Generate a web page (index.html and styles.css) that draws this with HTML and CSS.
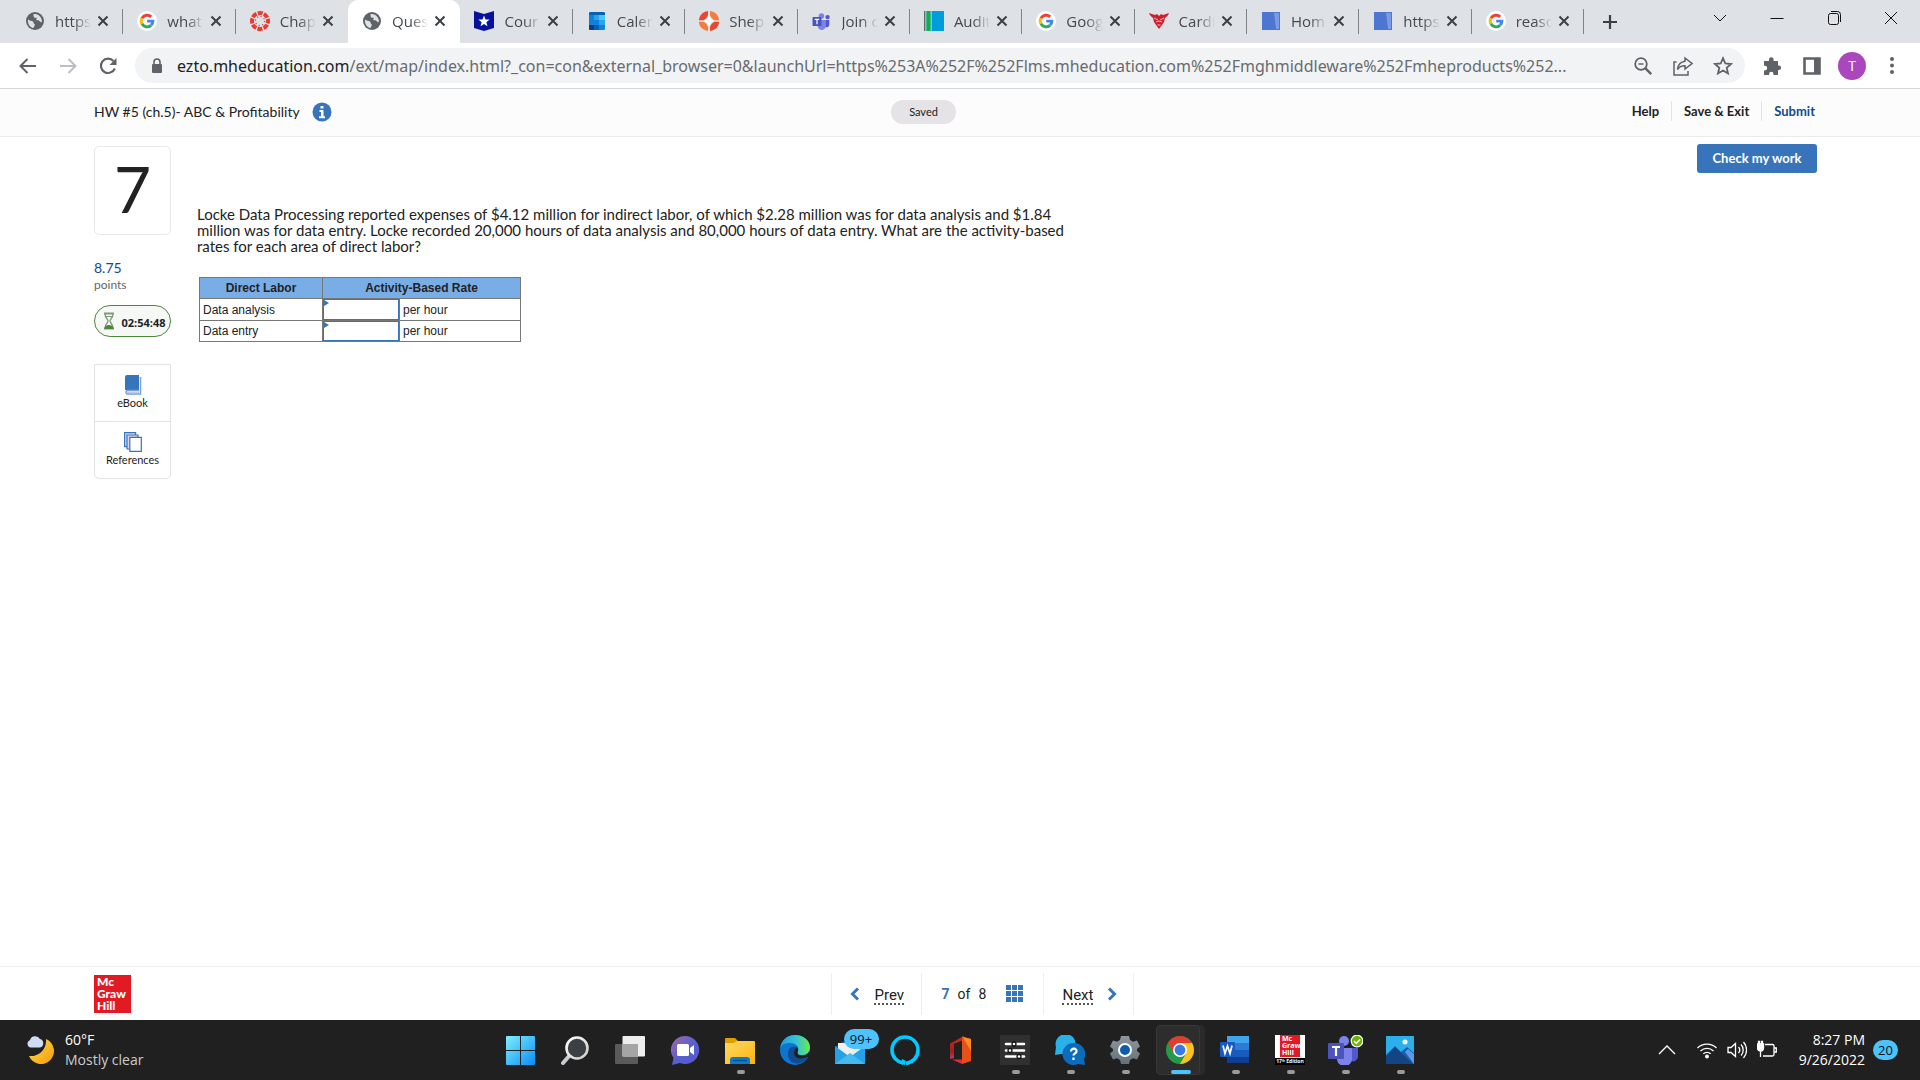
FILE: index.html
```html
<!DOCTYPE html>
<html lang="en">
<head>
<meta charset="utf-8">
<title>Question 7 - HW #5 (ch.5)- ABC &amp; Profitability</title>
<link rel="stylesheet" href="styles.css">
</head>
<body>
<svg class="defs" aria-hidden="true">
  <defs>
    <linearGradient id="win" x1="0" y1="0" x2="1" y2="1"><stop offset="0" stop-color="#7df0ff"/><stop offset="1" stop-color="#0a8cf5"/></linearGradient>
    <linearGradient id="lens" x1="0" y1="0" x2="1" y2="1"><stop offset="0" stop-color="#fff"/><stop offset="1" stop-color="#c9cdcf"/></linearGradient>
    <linearGradient id="chat" x1="0" y1="0" x2="1" y2="1"><stop offset="0" stop-color="#a56aa5"/><stop offset=".5" stop-color="#5a5fcf"/><stop offset="1" stop-color="#5358c8"/></linearGradient>
    <linearGradient id="folder" x1="0" y1="0" x2="1" y2="1"><stop offset="0" stop-color="#ffd968"/><stop offset="1" stop-color="#fbb50c"/></linearGradient>
    <linearGradient id="edge" x1="0" y1="0" x2="1" y2="0"><stop offset="0" stop-color="#1c9be0"/><stop offset=".55" stop-color="#34c4d6"/><stop offset="1" stop-color="#6cea4c"/></linearGradient>
    <linearGradient id="moon" x1="0" y1="0" x2="1" y2="1"><stop offset="0" stop-color="#ffdd4a"/><stop offset="1" stop-color="#f49b0c"/></linearGradient>
    <linearGradient id="office" x1="0" y1="0" x2="0" y2="1"><stop offset="0" stop-color="#d3261b"/><stop offset=".6" stop-color="#a02020"/><stop offset="1" stop-color="#c654a8"/></linearGradient>
    <linearGradient id="gear" x1="0" y1="0" x2="0" y2="1"><stop offset="0" stop-color="#8f979d"/><stop offset="1" stop-color="#65707a"/></linearGradient>
    <symbol id="globe" viewBox="0 0 20 20"><circle cx="10" cy="10" r="9" fill="#5f6368"/><path d="M3 8.500c1.800 1.500 3.500 1 5 2 1 .8.3 2 1.300 2.500.8.500.600 1.500 0 2.200-.5.600-.6 1.300-1 1.800C5 16.500 2.500 13 3 8.500zM8.500 3.200c2-.6 5.500.300 7.300 3.300.9 1.500 1.200 3 1 4.500-1 .7-1.500-.3-2.300-1-1-.8-2.300 0-3-.9-.5-.8-.2-1.500.5-2-.8-.6-2.300.2-3-.8-.6-1-.4-2.300-.5-3.100z" fill="#dee1e6"/></symbol>
    <symbol id="google" viewBox="0 0 20 20"><circle cx="10" cy="10" r="10" fill="#fff"/><g fill="none" stroke-width="2.900"><path d="M4.900 7.200A5.900 5.900 0 0 1 14.200 5.900" stroke="#ea4335"/><path d="M4.900 12.800A5.900 5.900 0 0 1 4.900 7.200" stroke="#fbbc05"/><path d="M14 14.300A5.900 5.900 0 0 1 4.900 12.800" stroke="#34a853"/><path d="M10.200 10.100H15.900A5.900 5.900 0 0 1 14 14.300" stroke="#4285f4"/></g></symbol>
    <symbol id="doc" viewBox="0 0 20 20"><path d="M1 1h18v18H1z" fill="#4d76d1"/><path d="M13 2h5v16h-3z" fill="#8eabe8" opacity=".7"/></symbol>
    <symbol id="close" viewBox="0 0 12 12"><path d="M1.500 1.500l9 9M10.500 1.500l-9 9" stroke="#3c4043" stroke-width="2"/></symbol>
    <symbol id="teams" viewBox="0 0 36 30"><circle cx="17" cy="6" r="5" fill="#7b83eb"/><circle cx="28" cy="8" r="4" fill="#5059c9"/><path d="M22 13h9v9a5 5 0 0 1-7 4z" fill="#5059c9"/><path d="M10 13h15v9a7 7 0 0 1-15 3z" fill="#7b83eb"/><rect x="1" y="8" width="16" height="16" rx="1" fill="#4b53bc"/><path d="M5 12h8M9 12v9" stroke="#fff" stroke-width="2.200"/></symbol>
  </defs>
</svg>

<header class="browser">
  <div class="tabstrip">
    <nav class="tabs" aria-label="Tabs">
      <div class="tab"><svg class="fav"><use href="#globe"/></svg><span class="tab-title">https</span><button class="x" aria-label="Close"><svg><use href="#close"/></svg></button></div>
      <div class="tab"><svg class="fav"><use href="#google"/></svg><span class="tab-title">what</span><button class="x" aria-label="Close"><svg><use href="#close"/></svg></button></div>
      <div class="tab before"><svg class="fav" viewBox="0 0 20 20"><circle cx="10" cy="10" r="8" fill="none" stroke="#ea3b30" stroke-width="4" stroke-dasharray="5 1.280" stroke-dashoffset="2.500"/><circle cx="10" cy="10" r="4.600" fill="none" stroke="#ea3b30" stroke-width="1.200" stroke-dasharray="1.200 2.410"/></svg><span class="tab-title">Chap</span><button class="x" aria-label="Close"><svg><use href="#close"/></svg></button></div>
      <div class="tab active"><svg class="fav"><use href="#globe"/></svg><span class="tab-title">Ques</span><button class="x" aria-label="Close"><svg><use href="#close"/></svg></button></div>
      <div class="tab"><svg class="fav" viewBox="0 0 20 20"><path d="M0 0l10 3L20 0v17l-10 3-10-3z" fill="#06129b"/><path d="M10 4.500l1.500 3.900 4.100.2-3.200 2.600 1.100 4-3.500-2.300-3.500 2.300 1.100-4-3.200-2.600 4.100-.2z" fill="#fff"/></svg><span class="tab-title">Cour</span><button class="x" aria-label="Close"><svg><use href="#close"/></svg></button></div>
      <div class="tab"><svg class="fav" viewBox="0 0 20 20"><rect x="2" y="1" width="16" height="18" rx="1.500" fill="#1080dc"/><path d="M2 3V2.500A1.500 1.500 0 0 1 3.500 1h13A1.500 1.500 0 0 1 18 2.500V4H2z" fill="#0660b4"/><path d="M12 4h6v5h-6z" fill="#45c8f5"/><path d="M7 4h5v5H7zM12 9h6v5h-6z" fill="#28a4ec"/><path d="M2 14h5v5H3.500A1.500 1.500 0 0 1 2 17.500z" fill="#123c73"/><path d="M7 14h5v5H7z" fill="#0b5eb0"/></svg><span class="tab-title">Calen</span><button class="x" aria-label="Close"><svg><use href="#close"/></svg></button></div>
      <div class="tab"><svg class="fav" viewBox="0 0 20 20"><path d="M9 0C3 1 0 5 0 9.300h4.500C6 8.500 8 7 9 4z" fill="#e8482f"/><path d="M11 0c6 1 9 5 9 9.300h-4.500C14 8.500 12 7 11 4z" fill="#f47c3c"/><path d="M9 20c-6-1-9-5-9-9.300h4.500C6 11.500 8 13 9 16z" fill="#f47c3c"/><path d="M11 20c6-1 9-5 9-9.300h-4.500C14 11.500 12 13 11 16z" fill="#e8482f"/><path d="M10 4c1 3.500 2.500 5 5 6-2.500 1-4 2.500-5 6-1-3.500-2.500-5-5-6 2.500-1 4-2.500 5-6z" fill="#fff"/></svg><span class="tab-title">Shep</span><button class="x" aria-label="Close"><svg><use href="#close"/></svg></button></div>
      <div class="tab"><svg class="fav"><use href="#teams"/></svg><span class="tab-title">Join c</span><button class="x" aria-label="Close"><svg><use href="#close"/></svg></button></div>
      <div class="tab"><svg class="fav" viewBox="0 0 20 20"><path d="M0 0h20v20H0z" fill="#009ddc"/><path d="M0 0h1.500v20H0z" fill="#666"/><path d="M1.500 0h1v20h-1zM6.500 0h1v20h-1z" fill="#cfe"/><path d="M2.500 0h4v20h-4z" fill="#13ae48"/></svg><span class="tab-title">Audit</span><button class="x" aria-label="Close"><svg><use href="#close"/></svg></button></div>
      <div class="tab"><svg class="fav"><use href="#google"/></svg><span class="tab-title">Goog</span><button class="x" aria-label="Close"><svg><use href="#close"/></svg></button></div>
      <div class="tab"><svg class="fav" viewBox="0 0 20 20"><path d="M0 2l6 2 2-1 2 2 2-2 2 1 6-2c-1 3-3 4-4 5l-1 4-2 3-3 4-3-4-2-3-1-4C3 6 1 5 0 2z" fill="#cd202e"/><path d="M5 7l4 2M15 7l-4 2M7 11l3-1 3 1M8.500 14h3" stroke="#f3b7bb" stroke-width="1" fill="none"/></svg><span class="tab-title">Cardi</span><button class="x" aria-label="Close"><svg><use href="#close"/></svg></button></div>
      <div class="tab"><svg class="fav"><use href="#doc"/></svg><span class="tab-title">Hom</span><button class="x" aria-label="Close"><svg><use href="#close"/></svg></button></div>
      <div class="tab"><svg class="fav"><use href="#doc"/></svg><span class="tab-title">https</span><button class="x" aria-label="Close"><svg><use href="#close"/></svg></button></div>
      <div class="tab"><svg class="fav"><use href="#google"/></svg><span class="tab-title">reasc</span><button class="x" aria-label="Close"><svg><use href="#close"/></svg></button></div>
    </nav>
    <button class="newtab" aria-label="New tab"><svg viewBox="0 0 16 16" width="16" height="16"><path d="M8 1v14M1 8h14" stroke="#3c4043" stroke-width="2.200"/></svg></button>
    <div class="winbtns">
      <button aria-label="Search tabs"><svg viewBox="0 0 16 16"><path d="M2 5l6 6 6-6"/></svg></button>
      <button aria-label="Minimize"><svg viewBox="0 0 16 16"><path d="M1.500 8.500h13"/></svg></button>
      <button aria-label="Restore"><svg viewBox="0 0 16 16"><rect x="2.500" y="3.500" width="10" height="11" rx="2"/><path d="M5 1.500h6.500a3 3 0 0 1 3 3V12"/></svg></button>
      <button aria-label="Close window"><svg viewBox="0 0 16 16"><path d="M2 2l12 12M14 2L2 14"/></svg></button>
    </div>
  </div>
  <div class="toolbar">
    <button class="tool" aria-label="Back"><svg viewBox="0 0 20 20"><path d="M18 10H3M9.500 3L2.500 10l7 7" fill="none" stroke="#5f6368" stroke-width="2"/></svg></button>
    <button class="tool" aria-label="Forward"><svg viewBox="0 0 20 20"><path d="M2 10h15M10.500 3l7 7-7 7" fill="none" stroke="#bcbec1" stroke-width="2"/></svg></button>
    <button class="tool" aria-label="Reload"><svg viewBox="0 0 20 20"><path d="M16.800 12.500A7.200 7.200 0 1 1 15.500 5" fill="none" stroke="#5f6368" stroke-width="2.100"/><path d="M18.500 2v7h-7z" fill="#5f6368"/></svg></button>
    <div class="omnibox">
      <svg class="lock" viewBox="0 0 12 16"><rect x="1" y="6" width="10" height="9" rx="1" fill="#5f6368"/><path d="M3 7V4a3 3 0 0 1 6 0v3" fill="none" stroke="#5f6368" stroke-width="1.600"/></svg>
      <div class="url"><span class="host">ezto.mheducation.com</span>/ext/map/index.html?_con=con&amp;external_browser=0&amp;launchUrl=https%253A%252F%252Flms.mheducation.com%252Fmghmiddleware%252Fmheproducts%252...</div>
      <button class="tool" aria-label="Zoom"><svg viewBox="0 0 20 20" fill="none" stroke="#5f6368"><circle cx="8" cy="8" r="5.800" stroke-width="1.800"/><path d="M12.200 12.200l6 6" stroke-width="2.400"/><path d="M5.500 8h5" stroke-width="1.500"/></svg></button>
      <button class="tool" aria-label="Share"><svg viewBox="0 0 20 20" fill="none" stroke="#5f6368" stroke-width="1.500"><path d="M3.500 6H1v13h14v-4"/><path d="M12 2l7 5.500-7 5.500v-3.200c-4 0-6 1.200-7.500 3.700.4-4 2.500-7.500 7.500-8.200z"/></svg></button>
      <button class="tool" aria-label="Bookmark"><svg viewBox="0 0 20 20"><path d="M10 2.200l2.300 5.300 5.700.5-4.300 3.800 1.300 5.700-5-3-5 3 1.300-5.700L2 8l5.700-.5z" fill="none" stroke="#5f6368" stroke-width="1.800"/></svg></button>
    </div>
    <button class="tool" aria-label="Extensions"><svg viewBox="0 0 20 20"><path d="M7 3.500a2.300 2.300 0 0 1 4.600 0V5H16v4.500h.8a2.300 2.300 0 0 1 0 4.600H16V19h-4.500v-1a2.200 2.200 0 0 0-4.400 0v1H2v-4.500h.8a2.400 2.400 0 0 0 0-4.800H2V5h5z" fill="#5f6368"/></svg></button>
    <button class="tool" aria-label="Side panel"><svg viewBox="0 0 20 20"><path d="M2.500 2.500h15v15h-15z" fill="none" stroke="#5f6368" stroke-width="2.600"/><path d="M12 2h6v16h-6z" fill="#5f6368"/></svg></button>
    <button class="avatar" aria-label="Profile">T</button>
    <button class="tool" aria-label="Menu"><svg viewBox="0 0 20 20" fill="#5f6368"><circle cx="10" cy="3" r="2"/><circle cx="10" cy="9.500" r="2"/><circle cx="10" cy="16" r="2"/></svg></button>
  </div>
</header>

<div class="page-head">
  <div class="title"><h1>HW #5 (ch.5)- ABC &amp; Profitability</h1><button class="info" aria-label="Information"><svg viewBox="0 0 20 20"><circle cx="10" cy="10" r="9.500" fill="#3874ba"/><path d="M10 4v2.500" stroke="#fff" stroke-width="3"/><path d="M7.500 9H10v5.500M7 15.200h6" fill="none" stroke="#fff" stroke-width="2"/><path d="M10.500 8.200v7" stroke="#fff" stroke-width="2"/></svg></button></div>
  <span class="saved">Saved</span>
  <nav class="actions"><a href="#help">Help</a><a href="#exit">Save &amp; Exit</a><a href="#submit" class="submit">Submit</a></nav>
</div>

<main class="content">
  <aside class="side">
    <div class="number">7</div>
    <div class="points"><strong>8.75</strong><span>points</span></div>
    <div class="timer"><svg viewBox="0 0 12 18"><path d="M1 1.500h10M1 16.500h10" stroke="#7f9a78" stroke-width="2"/><path d="M2 2c0 4 3 5 3 7s-3 3-3 7M10 2c0 4-3 5-3 7s3 3 3 7" fill="none" stroke="#7f9a78" stroke-width="1.300"/><path d="M3 4.500h6" stroke="#7f9a78"/><path d="M1.500 17c0-3 2-4 4.500-4s4.500 1 4.500 4z" fill="#4d8738"/></svg><time>02:54:48</time></div>
    <div class="resources">
      <button><svg viewBox="0 0 18 20"><path d="M3 0h12v15H1V2a2 2 0 0 1 2-2z" fill="#3874ba"/><path d="M16.500 2v17H3a2 2 0 0 1 0-3.500h12" fill="none" stroke="#73a2dc" stroke-width="1.500"/><path d="M3 17.300h12" stroke="#b9b9dc"/></svg>eBook</button>
      <button><svg viewBox="0 0 18 20" stroke="#3874ba" stroke-width="1.200"><path d="M.6.600h11v14H.6z" fill="#d9d6ec"/><path d="M3 3h11v14H3z" fill="#d9d6ec"/><path d="M5.800 5.400h11.500v14H5.800z" fill="#fff"/></svg>References</button>
    </div>
  </aside>
  <section class="question">
    <p>Locke Data Processing reported expenses of $4.12 million for indirect labor, of which $2.28 million was for data analysis and $1.84 million was for data entry. Locke recorded 20,000 hours of data analysis and 80,000 hours of data entry. What are the activity-based rates for each area of direct labor?</p>
    <table>
      <thead><tr><th scope="col" class="col-a">Direct Labor</th><th scope="col" colspan="2">Activity-Based Rate</th></tr></thead>
      <tbody>
        <tr><td><label for="rate1">Data analysis</label></td><td class="entry"><input id="rate1" type="text"></td><td class="col-c">per hour</td></tr>
        <tr><td><label for="rate2">Data entry</label></td><td class="entry"><input id="rate2" type="text"></td><td class="col-c">per hour</td></tr>
      </tbody>
    </table>
  </section>
  <button class="check">Check my work</button>
</main>

<footer class="page-foot">
  <div class="mgh"><span>Mc</span><span>Graw</span><span>Hill</span></div>
  <nav class="pager">
    <a href="#prev"><svg viewBox="0 0 10 14"><path d="M8 1.500L2.500 7 8 12.500"/></svg><span>Prev</span></a>
    <div class="count"><b>7</b><span>of</span><span>8</span><button class="grid" aria-label="All questions"><svg viewBox="0 0 18 18" fill="#3874ba"><path d="M0 0h5v5H0zM6 0h5v5H6zM12 0h5v5h-5zM0 6h5v5H0zM6 6h5v5H6zM12 6h5v5h-5zM0 12h5v5H0zM6 12h5v5H6zM12 12h5v5h-5z"/></svg></button></div>
    <a href="#next"><span>Next</span><svg viewBox="0 0 10 14"><path d="M2 1.500L7.500 7 2 12.500"/></svg></a>
  </nav>
</footer>

<footer class="taskbar">
  <button class="weather">
    <svg viewBox="0 0 28 28"><path d="M20 3a13 13 0 1 1-17 17c9 1 18-6 17-17z" fill="url(#moon)"/><path d="M4 11.500a4 4 0 0 1 0-7.500 5.500 5.500 0 0 1 10-1 4.400 4.400 0 0 1 0 8.500z" fill="#cfdcf5"/></svg>
    <span><b>60°F</b><i>Mostly clear</i></span>
  </button>
  <div class="apps">
    <button aria-label="Start"><svg viewBox="0 0 30 30"><path d="M1 2a1 1 0 0 1 1-1h13v14H1zM16 1h13a1 1 0 0 1 1 1v13H16zM1 16h14v14H2a1 1 0 0 1-1-1zM16 16h14v13a1 1 0 0 1-1 1H16z" fill="url(#win)"/></svg></button>
    <button aria-label="Search"><svg viewBox="0 0 30 30"><path d="M10 20l-7 8" stroke="#c9cdcf" stroke-width="4" stroke-linecap="round"/><circle cx="17" cy="13" r="10.500" fill="#3c4043" stroke="url(#lens)" stroke-width="2.600"/></svg></button>
    <button aria-label="Task view"><svg viewBox="0 0 30 30"><rect y="9" width="23" height="20" rx="1" fill="#5a5a5a"/><rect x="7.500" y="1" width="22.500" height="20.500" rx="1" fill="#eee"/><path d="M7.500 9H23v12.500H7.500z" fill="#a5a5a5"/></svg></button>
    <button aria-label="Chat"><svg viewBox="0 0 30 30"><path d="M15 1a14 14 0 1 1-5 27l-8 2 1.500-7A14 14 0 0 1 15 1z" fill="url(#chat)"/><rect x="7" y="9" width="12" height="12" rx="1.500" fill="#fff"/><path d="M20 13l4-3v10l-4-3z" fill="#fff"/></svg></button>
    <button aria-label="File Explorer" class="open"><svg viewBox="0 0 30 30"><path d="M0 4a1 1 0 0 1 1-1h9l3 3v5H0z" fill="#e09f00"/><path d="M0 8h9l3-2h17a1 1 0 0 1 1 1v22H0z" fill="url(#folder)"/><path d="M5 29v-4a3 3 0 0 1 3-3h14a3 3 0 0 1 3 3v4z" fill="#0f7ac9"/><path d="M8 25.500h14" stroke="#07508f" stroke-width="1.300"/></svg></button>
    <button aria-label="Edge"><svg viewBox="0 0 30 30"><circle cx="15" cy="15" r="15" fill="#0c75cf"/><path d="M0 14C1 5 7 0 15 0c9 0 15 6 15 12 0 5-3 8-8 8-3 0-5-1-4-3 2-6-3-9-8-9-5 0-9 2-10 6z" fill="url(#edge)"/><path d="M16 12c-4-2-8 2-8 7 0 7 6 11 12 9 4-1 7-4 8-6-5 3-14 2-14-4 0-3 2-4 2-6z" fill="#134a94"/><path d="M16 12c3 1 2 4 1.500 5.500-.5 1.500 1 3 4.500 3 4 0 6-2 7.500-4.500L30 22l-2.500 2c.5-1 .5-2 0-2-6 3-13.500 2-13.500-4 0-3 2-4 2-6z" fill="#202020"/></svg></button>
    <button aria-label="Mail"><svg viewBox="0 0 30 30"><path d="M0 12L15 2l15 10v5H0z" fill="#0d5ba8"/><path d="M3 8h24v12H3z" fill="#eee"/><path d="M0 11l15 11 15-11v18H0z" fill="#25a1e8"/><path d="M0 29l15-11 15 11z" fill="#45b9f0"/></svg><span class="badge">99+</span></button>
    <button aria-label="Alexa"><svg viewBox="0 0 30 30"><path d="M13.500 28.300C7 27 2 22 2 15a13 13 0 0 1 26 0c0 7-5 12.500-12 13.500" fill="none" stroke="#00caff" stroke-width="3.600"/><path d="M12 24l4 2-1 4-4-2z" fill="#00caff"/></svg></button>
    <button aria-label="Office"><svg viewBox="0 0 30 30"><path d="M19 1l-4 2-5 3-5 2.500V24l4-1V9l8-3v22z" fill="url(#office)"/><path d="M9 9l8-3v18.500l-8-1z" fill="#202020"/><path d="M17 1.500l9 2.500v22l-9 3z" fill="#e8501a"/><path d="M18 2l8 2v12L20 6z" fill="#ff8a1f"/><path d="M7 24.500h10V29z" fill="#e6263c"/></svg></button>
    <button aria-label="Equalizer" class="open"><svg viewBox="0 0 30 30"><path d="M0 0h30v30H0z" fill="#303030"/><path d="M6 9h18M6 15.500h18M6 21.500h18" stroke="#fff" stroke-width="2.600" stroke-linecap="round"/><g fill="#fff" stroke="#111" stroke-width="1.300"><circle cx="14" cy="9" r="2"/><circle cx="10" cy="15.500" r="2"/><circle cx="19" cy="21.500" r="2"/></g></svg></button>
    <button aria-label="Get Help" class="open"><svg viewBox="0 0 30 30"><path d="M0 20l1-8A10 10 0 1 1 11 19H6z" fill="#29b2ea"/><path d="M19 8a11 11 0 0 1 10 16l1 6-7-1A11 11 0 1 1 19 8z" fill="#0a6cbb"/><path d="M16 16.500c0-4 6-3.500 5.500 0-.3 2-3 2-3 4M18.500 22.500v2.500" fill="none" stroke="#fff" stroke-width="2.200"/></svg></button>
    <button aria-label="Settings" class="open"><svg viewBox="0 0 30 30"><path d="M11 1h8l1 4 3 1.700 4-1.200 3 6-3 2.500v2l3 2.500-3 6-4-1.200-3 1.700-1 4h-8l-1-4-3-1.700-4 1.200-3-6L3 16v-2L0 11.500l3-6 4 1.200L10 5z" fill="url(#gear)"/><circle cx="15" cy="15" r="6" fill="#0b5cad" stroke="#fff" stroke-width="2"/></svg></button>
    <button aria-label="Chrome" class="open current"><svg viewBox="0 0 30 30"><circle cx="15" cy="15" r="14" fill="#259b48"/><path d="M2.900 8A14 14 0 0 1 27.100 8H15l-6 10.500z" fill="#e33b2e"/><path d="M27.100 8A14 14 0 0 1 15 29l6.100-10.500L15 8z" fill="#fcc31e"/><circle cx="15" cy="15" r="7" fill="#fff"/><circle cx="15" cy="15" r="5.400" fill="#3b78e7"/></svg></button>
    <button aria-label="Word" class="open"><svg viewBox="0 0 30 30"><path d="M7 1h22v7H7z" fill="#41a5ee"/><path d="M7 8h22v7H7z" fill="#2b7cd3"/><path d="M7 15h22v7H7z" fill="#185abd"/><path d="M7 22h22v6H7z" fill="#103f91"/><rect y="7" width="15" height="15" rx="1" fill="#185abd"/><path d="M3 10.500l2 8 2.500-7.500 2.500 7.500 2-8" fill="none" stroke="#fff" stroke-width="1.700"/></svg></button>
    <button aria-label="McGraw Hill" class="open"><span class="mgh-app"><span>Mc<br>Graw<br>Hill</span><em>17ᵗʰ Edition</em></span></button>
    <button aria-label="Teams" class="open"><svg viewBox="0 0 36 30"><use href="#teams" width="36" height="30"/><circle cx="30" cy="6" r="5.800" fill="#6bb700" stroke="#fff" stroke-width="1.200"/><path d="M27 6l2.300 2.300L33 4.500" fill="none" stroke="#fff" stroke-width="1.600"/></svg></button>
    <button aria-label="Photos" class="open"><svg viewBox="0 0 30 30"><path d="M1 1h28v28H1z" fill="#2bb0ec"/><path d="M1 20l9-9 6 6 6-5 7 6v11H1z" fill="#1a5fae"/><path d="M20 17l3-3 6 5v10z" fill="#5a9be8"/><path d="M1 21l9-9 18 17H1z" fill="#124582"/><circle cx="20" cy="7" r="2.500" fill="#fff"/></svg></button>
  </div>
  <div class="tray">
    <button class="more" aria-label="Hidden icons"><svg viewBox="0 0 20 20"><path d="M2 14l8-8 8 8"/></svg></button>
    <button aria-label="Network"><svg viewBox="0 0 20 20"><path d="M.5 8a13.500 13.500 0 0 1 19 0M3.500 11a9.300 9.300 0 0 1 13 0M6.300 13.800a5.300 5.300 0 0 1 7.400 0"/><circle cx="10" cy="16.500" r="1.300" fill="#fff"/></svg></button>
    <button aria-label="Volume"><svg viewBox="0 0 20 20"><path d="M1 7.500h3L8.500 3.500v13L4 12.500H1zM11.500 7a4.500 4.500 0 0 1 0 6M14 4.500a8 8 0 0 1 0 11M16.500 2a12 12 0 0 1 0 16"/></svg></button>
    <button aria-label="Battery"><svg viewBox="0 0 20 20"><path d="M8 4.500h7.500a1.500 1.500 0 0 1 1.500 1.500v8.500a1.500 1.500 0 0 1-1.500 1.500H6M17.500 8h1.800v4h-1.800M3.500 10v7"/><path d="M.5 4h6v4a3 3 0 0 1-6 0zM1.500 1.500h1V4h-1zM4.500 1.500h1V4h-1z" fill="#fff"/></svg></button>
    <button class="clock"><span>8:27 PM</span><span>9/26/2022</span></button>
    <button class="notif" aria-label="Notifications">20</button>
  </div>
</footer>
</body>
</html>
```
FILE: styles.css
```css
* { box-sizing: border-box; }
body {
  margin: 0;
  min-height: 100vh;
  display: flex;
  flex-direction: column;
  background: #fff;
  color: #222;
  font-family: "Open Sans", sans-serif;
  font-size: 14px;
}
button {
  margin: 0;
  padding: 0;
  border: 0;
  background: none;
  color: inherit;
  font: inherit;
}
a { color: inherit; text-decoration: none; }
svg { display: block; flex: none; }
.defs { position: absolute; width: 0; height: 0; }

/* browser frame */
.browser { border-bottom: 1px solid #d5d7da; }
.tabstrip {
  display: flex;
  align-items: center;
  height: 43px;
  padding-left: 11px;
  background: #dee1e6;
}
.tabs { display: flex; flex: 0 0 82.4%; min-width: 0; max-width: 82.4%; height: 43px; }
.tab {
  position: relative;
  display: flex;
  flex: 1 1 0;
  min-width: 0;
  align-items: center;
  padding: 0 14px 2px 14px;
  color: #45494d;
}
.tab::after {
  content: "";
  position: absolute;
  right: 0;
  top: 9px;
  width: 1px;
  height: 25px;
  background: #808388;
}
.tab.before::after, .tab.active::after { display: none; }
.tab.active { background: #fff; border-radius: 10px 10px 0 0; }
.fav { width: 20px; height: 20px; }
.tab-title {
  flex: 1 1 0;
  min-width: 0;
  margin: 0 4px 0 10px;
  overflow: hidden;
  white-space: nowrap;
  font-size: 15px;
  line-height: 22px;
  -webkit-mask-image: linear-gradient(90deg, #000 50%, transparent 95%);
  mask-image: linear-gradient(90deg, #000 50%, transparent 95%);
}
.x svg { width: 12px; height: 12px; }
.newtab { padding: 8px; margin-left: 10px; }
.winbtns { display: flex; align-self: flex-start; margin-left: auto; padding-right: 1px; height: 36px; }
.winbtns button { display: grid; place-items: center; width: 57px; }
.winbtns svg { width: 16px; height: 16px; fill: none; stroke: #111; stroke-width: 1; }
.toolbar {
  display: flex;
  align-items: center;
  height: 45px;
  padding: 0 18px;
  gap: 20px;
}
.tool svg { width: 20px; height: 20px; }
.omnibox {
  display: flex;
  flex: 1;
  min-width: 0;
  align-items: center;
  height: 35px;
  gap: 20px;
  margin: 0 -3px;
  padding: 0 12px 0 16px;
  border-radius: 18px;
  background: #f1f3f4;
}
.lock { width: 12px; height: 16px; }
.url {
  flex: 1;
  min-width: 0;
  margin: 0 -10px 0 -6px;
  overflow: hidden;
  white-space: nowrap;
  color: #686b70;
  font-family: "Noto Sans", sans-serif;
  font-size: 16px;
  line-height: 24px;
}
.host { color: #202124; }
.avatar {
  width: 28px;
  height: 28px;
  margin: 0 -4px;
  border-radius: 50%;
  background: #ab47bc;
  color: #fff;
}

/* assignment header */
.page-head {
  display: grid;
  grid-template-columns: 797fr auto 861fr;
  align-items: center;
  height: 48px;
  padding: 0 103px 2px 94px;
  border-bottom: 1px solid #ececec;
  background: #fcfcfc;
  font-family: Lato, sans-serif;
}
.title { display: flex; align-items: center; gap: 12px; }
.title h1 { margin: 0; font-size: 14px; font-weight: 400; line-height: 20px; }
.info svg { width: 20px; height: 20px; }
.saved {
  padding: 0 18px;
  border-radius: 12px;
  background: #e5e3e5;
  font-size: 11px;
  line-height: 24px;
}
.actions {
  display: flex;
  justify-content: flex-end;
  padding-bottom: 2px;
  font-size: 13px;
  font-weight: 700;
  line-height: 20px;
}
.actions a { padding: 0 12px; }
.actions a + a { border-left: 1px solid #e4e4e4; }
.actions .submit { padding-right: 2px; color: #154a8a; }

/* question body */
.content {
  display: flex;
  flex: 1;
  align-items: flex-start;
  padding: 9px 103px 24px 94px;
  font-family: Lato, sans-serif;
}
.side { width: 77px; flex: none; }
.number {
  height: 89px;
  border: 1px solid #e8e8e8;
  border-radius: 5px;
  font-size: 64px;
  line-height: 84px;
  text-align: center;
}
.points { display: grid; margin-top: 24px; }
.points strong { color: #154a8a; font-size: 14px; font-weight: 400; line-height: 18px; }
.points span { color: #666; font-size: 12px; line-height: 16px; }
.timer {
  display: flex;
  align-items: center;
  justify-content: center;
  gap: 6px;
  height: 32px;
  margin-top: 12px;
  padding-left: 4px;
  border: 1px solid #4d8738;
  border-radius: 16px;
  background: #f6f8f6;
  font: 700 11px/20px "Open Sans", sans-serif;
}
.timer svg { width: 12px; height: 18px; }
.timer time { padding-top: 4px; }
.resources {
  display: grid;
  margin-top: 27px;
  border: 1px solid #e2e2e2;
  border-radius: 0 0 5px 5px;
}
.resources button {
  display: flex;
  flex-direction: column;
  align-items: center;
  justify-content: center;
  height: 56px;
  font-size: 11px;
  line-height: 16px;
}
.resources button + button { height: 57px; border-top: 1px solid #e2e2e2; }
.resources svg { width: 18px; height: 20px; }
.question { flex: 1; min-width: 0; padding: 60px 0 0 26px; }
.question p { max-width: 880px; margin: 0 0 23px; font-size: 15px; line-height: 16px; }
table {
  margin-left: 2px;
  border-collapse: collapse;
  font: 12px/16px "Liberation Sans", Arial, sans-serif;
}
th, td { height: 21px; padding: 0 3px; border: 1px solid #777; text-align: left; }
th { background: #79ade6; text-align: center; }
.col-a { width: 123px; }
.entry { position: relative; width: 77px; padding: 0; }
.entry::before {
  content: "";
  position: absolute;
  left: 1px;
  top: 1px;
  border-left: 5px solid #3874ba;
  border-top: 3px solid transparent;
  border-bottom: 3px solid transparent;
}
.entry input {
  display: block;
  width: 76px;
  height: 20px;
  border: 1px solid #3874ba;
  background: #fff;
  font: inherit;
}
tbody tr:first-child td { height: 22px; }
tbody tr:first-child input { height: 21px; }
.col-c { width: 121px; }
.check {
  width: 120px;
  height: 29px;
  margin-top: -2px;
  padding-bottom: 2px;
  border-radius: 3px;
  background: #3874ba;
  color: #fff;
  font-size: 13px;
  font-weight: 700;
}

/* assignment footer */
.page-foot {
  display: grid;
  grid-template-columns: 738fr auto 683fr;
  align-items: center;
  height: 54px;
  padding: 0 103px 0 94px;
  border-top: 1px solid #eee;
}
.mgh {
  display: grid;
  align-content: center;
  width: 37px;
  height: 38px;
  padding-left: 3px;
  background: #e21a23;
  color: #fff;
  font: 900 12px/12px Lato, sans-serif;
}
.pager { display: flex; height: 42px; border-right: 1px solid #eee; font: 14px/20px Roboto, sans-serif; }
.pager > * { display: flex; align-items: center; border-left: 1px solid #eee; }
.pager a { width: 90px; gap: 14px; padding: 0 18px; }
.pager a span { margin-top: 4px; border-bottom: 2px dotted #555; font-size: 15px; line-height: 16px; }
.pager a svg { width: 10px; height: 14px; fill: none; stroke: #3874ba; stroke-width: 3; }
.count { width: 122px; gap: 8px; padding-left: 19px; }
.count b { color: #3874ba; }
.grid { margin-left: 12px; }
.grid svg { width: 18px; height: 18px; }

/* desktop taskbar */
.taskbar {
  display: grid;
  grid-template-columns: 1fr auto 1fr;
  align-items: center;
  height: 60px;
  padding: 0 22px;
  background: #202020;
  color: #fff;
}
.weather { display: flex; align-items: center; gap: 11px; padding-left: 4px; text-align: left; }
.weather svg { width: 28px; height: 28px; }
.weather span { display: grid; line-height: 20px; }
.weather b { font-weight: 400; }
.weather i { color: #ccc; font-style: normal; }
.apps { display: flex; }
.apps button {
  position: relative;
  display: grid;
  place-items: center;
  width: 55px;
  height: 50px;
}
.apps svg { height: 30px; min-width: 30px; max-width: 36px; }
.open::after {
  content: "";
  position: absolute;
  bottom: 1px;
  left: 24px;
  width: 8px;
  height: 4px;
  border-radius: 2px;
  background: #9a9a9a;
}
.current::before {
  content: "";
  position: absolute;
  top: 0;
  left: 3px;
  width: 44px;
  height: 50px;
  border-radius: 5px;
  background: #2d2d2d;
  box-shadow: 5px 0 0 #2a2a2a, inset 0 0 0 1px #383838;
}
.current svg { position: relative; }
.current::after { left: 18px; width: 20px; background: #4cc2ff; }
.badge {
  position: absolute;
  top: 4px;
  left: 21px;
  width: 35px;
  border-radius: 10px;
  background: #4cc2ff;
  color: #111;
  font-size: 13px;
  line-height: 20px;
}
.mgh-app { display: grid; width: 30px; height: 30px; grid-template-rows: 23px 7px; background: #fff; }
.mgh-app span {
  width: 20px;
  height: 22px;
  margin-left: 5px;
  padding-left: 2px;
  background: #e21a23;
  font-size: 7px;
  font-weight: 700;
  line-height: 7px;
  text-align: left;
}
.mgh-app em { background: #000; font-size: 5px; font-style: normal; font-weight: 700; line-height: 7px; }
.tray { display: flex; align-items: center; justify-content: flex-end; gap: 10px; }
.tray svg { width: 20px; height: 20px; fill: none; stroke: #fff; stroke-width: 1.3; }
.more { margin-right: 10px; }
.clock { display: grid; margin-left: 12px; text-align: right; line-height: 20px; }
.notif {
  width: 25px;
  height: 20px;
  margin-left: -2px;
  border-radius: 10px;
  background: #4cc2ff;
  color: #111;
  font-size: 13px;
  line-height: 20px;
}
```
